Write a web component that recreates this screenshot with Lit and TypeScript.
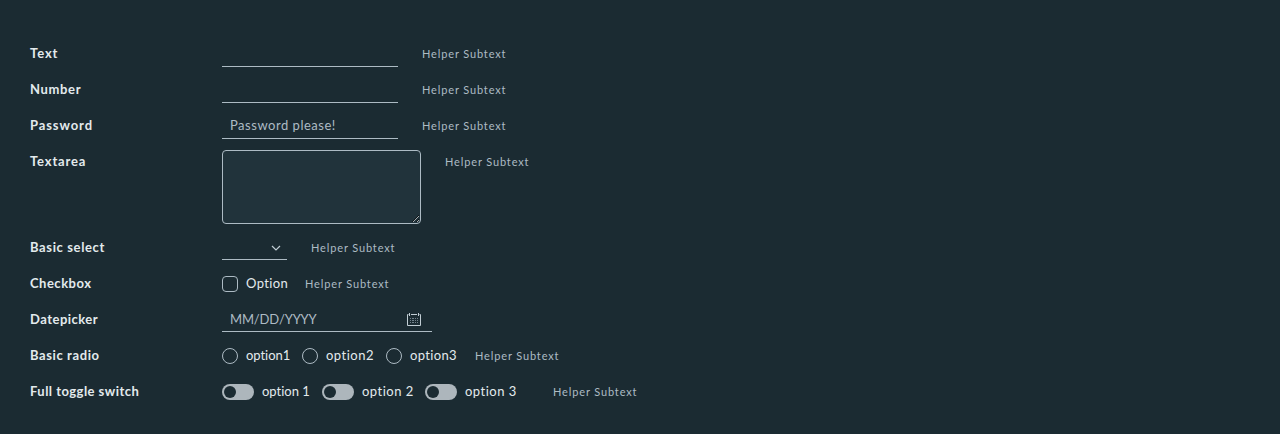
import { LitElement, html, css, svg, type TemplateResult } from "lit";
import { customElement, property } from "lit/decorators.js";

@customElement("form-row")
class FormRow extends LitElement {
  @property() label = "";
  @property() spacing = "0";

  static styles = css`
    :host {
      display: grid;
      grid-template-columns: 192px auto;
      justify-content: start;
      min-height: 24px;
    }
    .label {
      color: #e3eaed;
      font-weight: 700;
      line-height: 22px;
      white-space: nowrap;
    }
    .controls {
      display: flex;
      align-items: flex-start;
    }
  `;

  render() {
    return html`
      <div class="label" style="letter-spacing:${this.spacing}px">${this.label}</div>
      <div class="controls"><slot></slot></div>
    `;
  }
}

@customElement("app-root")
class AppRoot extends LitElement {
  static styles = css`
    :host {
      display: block;
      box-sizing: border-box;
      height: 434px;
      padding: 42px 30px 0;
      overflow: hidden;
      background: #1b2b32;
      color: #e3eaed;
      font: 400 13px/24px Metropolis, Lato, sans-serif;
      font-variant-ligatures: none;
    }
    .form {
      display: grid;
      gap: 12px;
    }
    .input {
      box-sizing: border-box;
      width: 176px;
      height: 25px;
      margin: 0 0 -1px;
      padding: 0 8px 2px;
      border: 0;
      border-bottom: 1px solid #adbbc4;
      border-radius: 0;
      background: none;
      color: #e3eaed;
      font: inherit;
      line-height: 22px;
      letter-spacing: 0.52px;
      outline: 0;
    }
    .input::placeholder,
    .date::placeholder {
      color: #adbbc4;
      opacity: 1;
    }
    .area {
      box-sizing: border-box;
      display: block;
      width: 199px;
      height: 74px;
      margin: 0;
      border: 1px solid #adbbc4;
      border-radius: 4px;
      background: #21333b;
      color: #e3eaed;
      font: inherit;
      outline: 0;
    }
    .helper {
      flex: none;
      margin-left: 24px;
      color: #adbbc4;
      font-size: 11px;
      letter-spacing: 0.86px;
      white-space: nowrap;
    }
    .select {
      box-sizing: border-box;
      display: flex;
      justify-content: flex-end;
      width: 65px;
      height: 24px;
      padding: 7px 6px 0 0;
      border-bottom: 1px solid #adbbc4;
    }
    .date-field {
      box-sizing: border-box;
      display: flex;
      justify-content: space-between;
      width: 210px;
      height: 24px;
      padding: 0 10px 0 8px;
      border-bottom: 1px solid #adbbc4;
    }
    .date {
      box-sizing: border-box;
      width: 150px;
      height: 23px;
      padding: 0 0 1px;
      border: 0;
      background: none;
      font: inherit;
      line-height: 22px;
      letter-spacing: -0.15px;
      outline: 0;
    }
    .calendar {
      margin-top: 4px;
    }
    .option {
      display: flex;
      flex: none;
      white-space: nowrap;
    }
    .box,
    .radio {
      box-sizing: border-box;
      flex: none;
      width: 16px;
      height: 16px;
      margin: 4px 8px 0 0;
      border: 1px solid #adbbc4;
      border-radius: 4px;
    }
    .radio {
      border-radius: 50%;
    }
    .switch {
      box-sizing: border-box;
      flex: none;
      width: 32px;
      height: 16px;
      margin: 4px 8px 0 0;
      padding: 2px;
      border-radius: 8px;
      background: #adb6bc;
    }
    .knob {
      width: 12px;
      height: 12px;
      border-radius: 50%;
      background: #1b2b32;
    }
    .text {
      line-height: 22px;
    }
    .w-check {
      width: 59px;
      letter-spacing: 0.35px;
    }
    .w-radio1 {
      width: 80px;
      letter-spacing: -0.05px;
    }
    .w-radio2 {
      width: 84px;
      letter-spacing: 0.5px;
    }
    .w-radio3 {
      width: 65px;
      letter-spacing: 0.35px;
    }
    .w-switch1 {
      width: 100px;
      letter-spacing: 0;
    }
    .w-switch2 {
      width: 103px;
      letter-spacing: 0.5px;
    }
    .w-switch3 {
      width: 104px;
      letter-spacing: 0.5px;
    }
    svg {
      display: block;
      fill: none;
      stroke: #c1cdd4;
    }
  `;

  private helper(): TemplateResult {
    return html`<span class="helper">Helper Subtext</span>`;
  }

  private calendarDots() {
    return [6, 8, 10].map((y) =>
      [4, 6, 7, 9, 11].map((x) => svg`<rect x=${x} y=${y} width="1" height="1" fill="#71808a" stroke="none"></rect>`)
    );
  }

  render() {
    return html`
      <div class="form">
        <form-row label="Text" spacing="0.9"><input class="input" type="text" />${this.helper()}</form-row>
        <form-row label="Number" spacing="0.65"><input class="input" type="text" inputmode="numeric" />${this.helper()}</form-row>
        <form-row label="Password" spacing="0.9">
          <input class="input" type="password" placeholder="Password please!" />${this.helper()}
        </form-row>
        <form-row label="Textarea" spacing="0.85"><textarea class="area"></textarea>${this.helper()}</form-row>
        <form-row label="Basic select" spacing="0.63">
          <div class="select">
            <svg width="10" height="10" viewBox="0 0 10 10"><path d="M1 3l4 4 4-4" stroke-width="1.2"></path></svg>
          </div>
          ${this.helper()}
        </form-row>
        <form-row label="Checkbox" spacing="0.5">
          <label class="option w-check"><span class="box"></span><span class="text">Option</span></label>${this.helper()}
        </form-row>
        <form-row label="Datepicker" spacing="0.48">
          <div class="date-field">
            <input class="date" type="text" placeholder="MM/DD/YYYY" />
            <svg class="calendar" width="16" height="16" viewBox="0 0 16 16">
              <path d="M2.5 2.5h-1v11h13v-11h-1M5 2.5h6M3.5 1v3M12.5 1v3"></path>
              ${this.calendarDots()}
            </svg>
          </div>
        </form-row>
        <form-row label="Basic radio" spacing="0.6">
          ${[1, 2, 3].map(
            (n) => html`<label class="option w-radio${n}"><span class="radio"></span><span class="text">option${n}</span></label>`
          )}
          ${this.helper()}
        </form-row>
        <form-row label="Full toggle switch" spacing="0.46">
          ${[1, 2, 3].map(
            (n) => html`<label class="option w-switch${n}"
              ><span class="switch"><div class="knob"></div></span><span class="text">option ${n}</span></label
            >`
          )}
          ${this.helper()}
        </form-row>
      </div>
    `;
  }
}
